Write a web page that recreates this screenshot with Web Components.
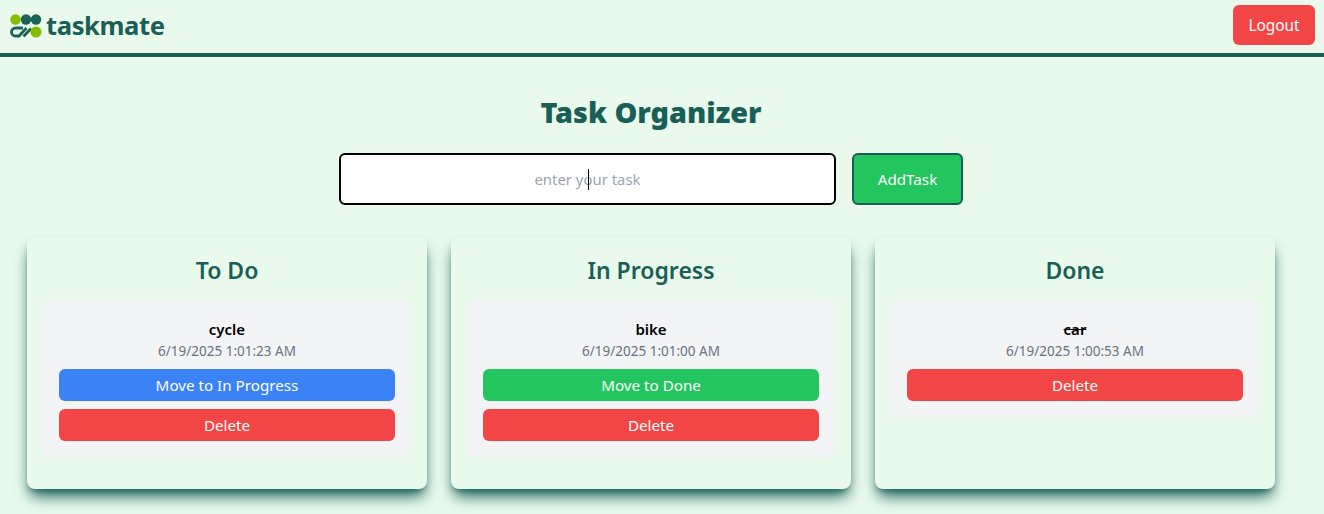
<!DOCTYPE html>
<html><head><meta charset="utf-8"><style>
html,body{margin:0;padding:0;background:#e9faed;}
body{font-family:"Noto Sans","Open Sans",sans-serif;width:1324px;height:514px;overflow:hidden;}
</style></head><body>
<tm-header></tm-header>
<tm-main></tm-main>
<script>
const FONT='"Noto Sans","Open Sans",sans-serif';
class TmHeader extends HTMLElement{constructor(){super();this.attachShadow({mode:'open'}).innerHTML=`<style>
:host{display:flex;box-sizing:border-box;height:57px;border-bottom:4px solid #1a5f57;align-items:flex-start;justify-content:space-between;padding:5px 9px 0 10px;font-family:${FONT}}
.logo{display:flex;align-items:center;gap:4px;height:41px;color:#1a5f57;font-size:25.6px;font-weight:700;letter-spacing:-.4px}
svg{display:block}
button{width:82px;height:40px;border:0;border-radius:6px;background:#f24646;color:#fff;font:400 15.4px ${FONT};padding:0}
</style><div class="logo"><svg width="32" height="24" viewBox="0 0 32 24"><circle cx="5.5" cy="5.5" r="5.2" fill="#84bd00"/><circle cx="16" cy="5.5" r="5.2" fill="#1a6355"/><circle cx="26" cy="5.5" r="5.2" fill="#1a6355"/><path d="M13 14H5.5a4 4 0 0 0 0 8H9l7.5-8" fill="none" stroke="#1a6355" stroke-width="2.8"/><path d="M13.5 22.5l7.5-8" fill="none" stroke="#1a6355" stroke-width="2.8"/><circle cx="26" cy="18" r="5.5" fill="#84bd00"/></svg><span>taskmate</span></div><button>Logout</button>`}}
class TmMain extends HTMLElement{constructor(){super();this.attachShadow({mode:'open'}).innerHTML=`<style>
:host{display:block;width:1302px;font-family:${FONT}}
h1{margin:0;padding-top:35px;height:40px;line-height:40px;text-align:center;font-size:28.8px;font-weight:900;color:#1a5f57}
form{display:flex;justify-content:center;gap:16px;margin-top:21px}
.inp{position:relative;box-sizing:border-box;width:497px;height:52px;border:2px solid #000;border-radius:6px;background:#fff;display:flex;align-items:center;justify-content:center;color:#9ca3af;font-size:14.9px}
.caret{position:absolute;left:247px;top:14px;width:1px;height:21px;background:#000}
.add{box-sizing:border-box;width:111px;height:52px;border:2px solid #1a5f57;border-radius:6px;background:#22c55e;color:#fff;font:400 15.2px ${FONT};padding:0}
.cols{display:grid;grid-template-columns:repeat(3,400px);gap:24px;justify-content:center;margin-top:32px}
</style><h1>Task Organizer</h1>
<form><div class="inp"><span>enter your task</span><i class="caret"></i></div><button type="button" class="add">AddTask</button></form>
<div class="cols">
<tm-column title="To Do"><tm-task name="cycle" date="6/19/2025 1:01:23 AM" move="Move to In Progress" color="#3b82f6"></tm-task></tm-column>
<tm-column title="In Progress"><tm-task name="bike" date="6/19/2025 1:01:00 AM" move="Move to Done" color="#22c55e"></tm-task></tm-column>
<tm-column title="Done"><tm-task name="car" date="6/19/2025 1:00:53 AM" done></tm-task></tm-column>
</div>`}}
class TmColumn extends HTMLElement{connectedCallback(){if(this.shadowRoot)return;this.attachShadow({mode:'open'}).innerHTML=`<style>
:host{display:block;box-sizing:border-box;height:252px;padding:16px;border-radius:8px;background:#e9faed;box-shadow:0 10px 15px -3px #1a5f57,0 4px 6px -4px #1a5f57;font-family:${FONT}}
h2{margin:0 0 15px;padding-top:1px;font-size:23px;line-height:32px;font-weight:600;text-align:center;color:#1a5f57}
</style><h2>${this.getAttribute('title')}</h2><slot></slot>`}}
class TmTask extends HTMLElement{connectedCallback(){if(this.shadowRoot)return;const m=this.getAttribute('move'),d=this.hasAttribute('done');this.attachShadow({mode:'open'}).innerHTML=`<style>
:host{display:block;padding:16px;border-radius:8px;background:#f3f4f6;text-align:center;font-family:${FONT}}
.n{font-size:15px;line-height:24px;font-weight:600;color:#000}.n.d{text-decoration:line-through}
.t{font-size:13.5px;line-height:20px;color:#6b7280}
.b{display:flex;flex-direction:column;gap:8px;margin-top:8px}
button{height:32px;border:0;border-radius:6px;color:#fff;font:400 15.2px ${FONT};padding:0}
</style><div class="n${d?' d':''}">${this.getAttribute('name')}</div><div class="t">${this.getAttribute('date')}</div><div class="b">${m?`<button style="background:${this.getAttribute('color')}">${m}</button>`:''}<button style="background:#f24646">Delete</button></div>`}}
customElements.define('tm-header',TmHeader);
customElements.define('tm-task',TmTask);
customElements.define('tm-column',TmColumn);
customElements.define('tm-main',TmMain);
</script></body></html>
